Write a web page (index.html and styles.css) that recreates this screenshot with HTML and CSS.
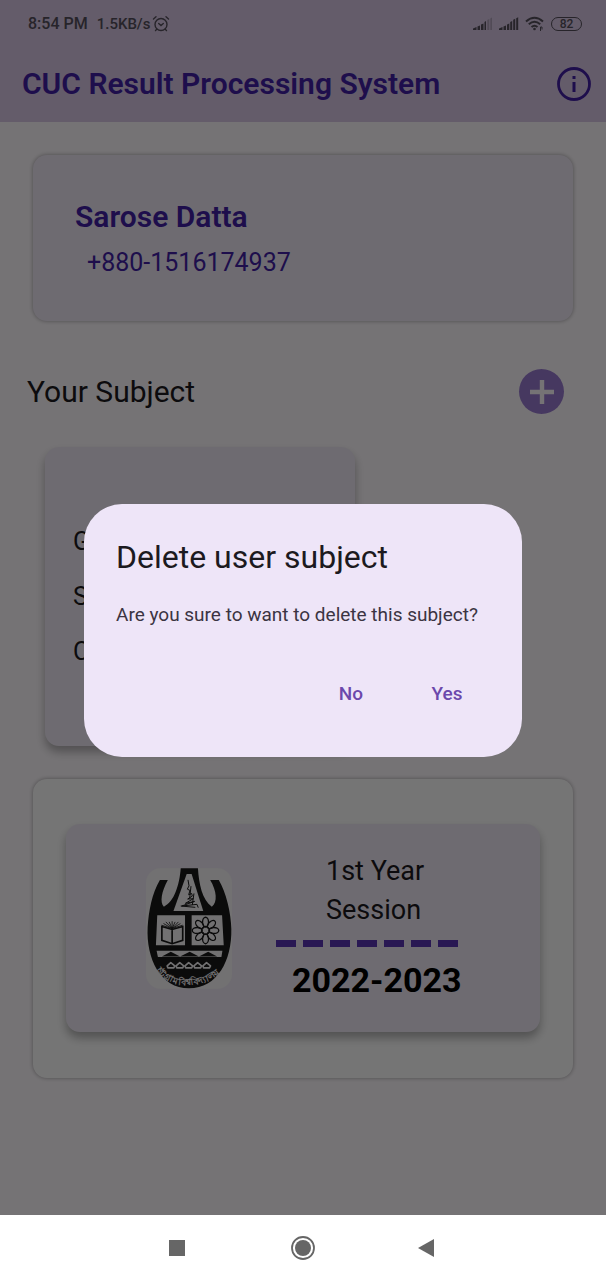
FILE: index.html
```html
<!DOCTYPE html>
<html lang="en">
<head>
<meta charset="utf-8">
<meta name="viewport" content="width=device-width, initial-scale=1">
<title>CUC Result Processing System</title>
<link rel="stylesheet" href="styles.css">
</head>
<body>
<div class="app">
  <header class="top">
    <div class="status">
      <span>8:54 PM</span>
      <span class="speed">1.5KB/s</span>
      <svg class="alarm" width="18" height="18" viewBox="0 0 18 18" fill="none" stroke="currentColor" stroke-width="1.4" stroke-linecap="round"><circle cx="9" cy="9.500" r="6"/><path d="M1.500 4 4 1.800M16.500 4 14 1.800M4.700 14.200 3.500 15.600M13.300 14.200l1.200 1.400M6.700 8.500 9 10.500l2.300-2"/></svg>
      <span class="status-icons">
        <svg width="20" height="14" viewBox="0 0 20 14" fill="currentColor"><path d="M0 13v-1.500L3.500 10v3zM4.500 13V9.500L7 8.500V13zM8 13V7.500l2.500-1V13zM11.500 13V5L13 4v9z"/><path opacity=".3" d="M14.300 13V3l2-1v11zM17.300 13V1.500L19 .5V13z"/></svg>
        <svg width="20" height="14" viewBox="0 0 20 14" fill="currentColor"><path d="M0 13v-1.500L3.500 10v3zM4.500 13V9.500L7 8.500V13zM8 13V7.500l2.300-1V13zM11.200 13V5l2-1v9zM14.200 13V2.800l2-1V13zM17.200 13V1.200l2-.9V13z"/></svg>
        <svg width="20" height="16" viewBox="0 0 20 16" fill="none" stroke="currentColor" stroke-width="2"><path d="M1 5.500Q9.500-2 18 5.500M3.800 8.300q5.700-5 11.400 0M6.500 11q3-2.600 6 0"/><circle cx="9.500" cy="13" r="1.300" fill="currentColor" stroke="none"/><path stroke-width="1" d="M15.500 15v-4h1.500v2.500"/></svg>
        <span class="battery">82</span>
      </span>
    </div>
    <div class="bar">
      <h1>CUC Result Processing System</h1>
      <button class="icon-button" aria-label="Information">
        <svg width="34" height="34" viewBox="0 0 34 34"><circle cx="17" cy="17" r="15.500" fill="none" stroke="currentColor" stroke-width="2.800"/><path fill="currentColor" d="M15.500 9h3v3h-3zM15.500 15h3v10h-3z"/></svg>
      </button>
    </div>
  </header>
  <main>
    <section class="profile">
      <h2>Sarose Datta</h2>
      <p>+880-1516174937</p>
    </section>
    <div class="subject-head">
      <h2>Your Subject</h2>
      <button class="add" aria-label="Add subject">
        <svg width="24" height="24" viewBox="0 0 24 24"><path fill="currentColor" d="M9.800 0h4.400v9.800H24v4.400h-9.800V24H9.800v-9.800H0V9.800h9.800z"/></svg>
      </button>
    </div>
    <section class="subject">
      <p>G</p>
      <p>S</p>
      <p>C</p>
    </section>
    <section class="sessions">
      <article class="session">
        <svg class="crest" width="86" height="121" viewBox="45 40 260 364" role="img" aria-label="University crest">
          <rect x="45" y="40" width="260" height="364" rx="44" fill="#f8f6f8"/>
          <path d="M150 40h52c3 48 13 96 42 116 18-14 15-48-5-81h26c22 37 37 99 38 148 2 96-42 180-128 180S45 313 50 218c3-49 13-103 37-143h24c-19 35-25 67-12 81 31-14 47-65 51-116z" fill="#181818"/>
          <path d="M168 57h15l35 112h-90z" fill="#f8f6f8"/>
          <path d="M172 75l3 18-5 10 8 4-4 13 9-4 2 8-14 9 17-1-24 14 28-6-39 14 46-5 4 10M181 94l-4 37M190 116l-5 35M150 154l44 4" fill="none" stroke="#181818" stroke-width="3"/>
          <path d="M79 182h84v91H75zM183 182h92l5 91h-97zM77 289h199l-3 19H81z" fill="#f8f6f8"/>
          <path d="M93 216v42l31 10 32-10v-42l-32 9zM124 225v42" fill="#f8f6f8" stroke="#181818" stroke-width="5"/>
          <path d="M124 222l-32-10M124 222l-26-15M124 222l-19-20M124 222l-9-20M124 222v-22M124 222l9-20M124 222l19-20M124 222l25-15M124 222l32-10" stroke="#181818" stroke-width="2.500"/>
          <g fill="none" stroke="#181818" stroke-width="4">
            <circle cx="225" cy="228" r="12"/>
            <ellipse cx="225" cy="203" rx="9" ry="15"/>
            <ellipse cx="225" cy="203" rx="9" ry="15" transform="rotate(45 225 228)"/>
            <ellipse cx="225" cy="203" rx="9" ry="15" transform="rotate(90 225 228)"/>
            <ellipse cx="225" cy="203" rx="9" ry="15" transform="rotate(135 225 228)"/>
            <ellipse cx="225" cy="203" rx="9" ry="15" transform="rotate(180 225 228)"/>
            <ellipse cx="225" cy="203" rx="9" ry="15" transform="rotate(225 225 228)"/>
            <ellipse cx="225" cy="203" rx="9" ry="15" transform="rotate(270 225 228)"/>
            <ellipse cx="225" cy="203" rx="9" ry="15" transform="rotate(315 225 228)"/>
          </g>
          <path d="M93 307l27-15 28 15 29-15 28 15 28-15 27 15z" fill="#181818"/>
          <path d="M111 341l-2-6 11-10 12 10-3 6zM138 341l-2-6 11-10 12 10-3 6zM165 341l-2-6 11-10 12 10-3 6zM192 341l-2-6 11-10 12 10-3 6zM219 341l-2-6 11-10 12 10-3 6z" fill="none" stroke="#f8f6f8" stroke-width="5" stroke-linejoin="round"/>
          <path id="rim" d="M74 346C112 412 240 412 284 334" fill="none"/>
          <text class="crest-text"><textPath href="#rim">চট্টগ্রাম বিশ্ববিদ্যালয়</textPath></text>
        </svg>
        <div class="session-info">
          <p class="year">1st Year<br>Session</p>
          <div class="dashes"><i></i><i></i><i></i><i></i><i></i><i></i><i></i></div>
          <strong>2022-2023</strong>
        </div>
      </article>
    </section>
  </main>
  <div class="scrim">
    <div class="dialog" role="alertdialog" aria-modal="true" aria-labelledby="dialog-title" aria-describedby="dialog-text">
      <h2 id="dialog-title">Delete user subject</h2>
      <p id="dialog-text">Are you sure to want to delete this subject?</p>
      <div class="actions">
        <button>No</button>
        <button>Yes</button>
      </div>
    </div>
  </div>
</div>
<nav class="system-nav">
  <button aria-label="Recent apps"><svg width="24" height="24" viewBox="0 0 24 24"><path fill="currentColor" d="M3 4h16v16H3z"/></svg></button>
  <button aria-label="Home"><svg width="24" height="24" viewBox="0 0 24 24"><circle cx="12" cy="12" r="11" fill="none" stroke="currentColor" stroke-width="1.800"/><circle cx="12" cy="12" r="8" fill="currentColor"/></svg></button>
  <button aria-label="Back"><svg width="24" height="24" viewBox="0 0 24 24"><path fill="currentColor" d="M18 3v18L2 12z"/></svg></button>
</nav>
</body>
</html>
```
FILE: styles.css
```css
* { box-sizing: border-box; }
body {
  margin: 0;
  min-height: 100vh;
  display: flex;
  flex-direction: column;
  background: #fff;
  color: #1c1a20;
  font-family: Roboto, "Noto Sans", sans-serif;
}
h1, h2, p { margin: 0; font-weight: 400; }
button {
  padding: 0;
  border: 0;
  background: none;
  color: inherit;
  font: inherit;
}
svg { display: block; }

.app { position: relative; flex: 1; background: #fffbff; }
.top { background: #d9c8e6; }
.status {
  display: flex;
  align-items: center;
  height: 47px;
  padding: 0 24px 0 28px;
  color: #55505c;
  font-size: 16px;
  font-weight: 500;
}
.speed { margin-left: 9px; font-size: 15px; }
.alarm { margin-left: 2px; }
.status-icons { display: flex; align-items: center; gap: 6px; margin-left: auto; }
.battery {
  width: 31px;
  height: 14px;
  border: 1px solid;
  border-radius: 7px;
  font-size: 12px;
  line-height: 12px;
  text-align: center;
}
.bar {
  display: flex;
  align-items: center;
  justify-content: space-between;
  height: 75px;
  padding: 0 15px 2px 22px;
  color: #431fa6;
}
.bar h1 { font-size: 30px; font-weight: 600; }

main { padding: 33px; }
.profile {
  height: 166px;
  padding: 44px 42px;
  border-radius: 14px;
  background: #f0eaf6;
  box-shadow: 0 0 4px rgba(0, 0, 0, .35);
  color: #431fa6;
}
.profile h2 { font-size: 30px; line-height: 36px; font-weight: 600; }
.profile p { padding: 10px 0 0 12px; font-size: 25px; line-height: 36px; }
.subject-head {
  display: flex;
  align-items: center;
  justify-content: space-between;
  margin: 48px 9px 0 -6px;
}
.subject-head h2 { font-size: 30px; }
.add {
  display: grid;
  place-items: center;
  width: 45px;
  height: 45px;
  border-radius: 50%;
  background: #9a7bd2;
  color: #fffbff;
}
.subject {
  width: 310px;
  height: 299px;
  margin: 33px 12px 0;
  padding: 67px 28px;
  border-radius: 14px;
  background: #f0eaf6;
  box-shadow: 0 6px 10px rgba(0, 0, 0, .3);
  font-size: 25px;
  line-height: 55px;
}
.sessions {
  margin-top: 33px;
  padding: 45px 33px 46px;
  border-radius: 14px;
  background: #fff;
  box-shadow: 0 0 4px rgba(0, 0, 0, .35);
}
.session {
  display: flex;
  gap: 44px;
  height: 208px;
  padding: 28px 80px;
  border-radius: 14px;
  background: #f0eaf6;
  box-shadow: 0 6px 10px rgba(0, 0, 0, .3);
}
.crest { flex: none; margin-top: 16px; }
.crest-text { fill: #f8f6f8; font-size: 27px; font-weight: 700; }
.session-info { display: flex; flex-direction: column; white-space: nowrap; }
.year { padding-left: 50px; font-size: 27px; line-height: 39px; }
.dashes { display: flex; gap: 7px; margin: 10px 0; }
.dashes i { width: 20px; height: 7px; background: #5b35b5; }
.session-info strong {
  padding-left: 16px;
  color: #000;
  font-size: 34px;
  line-height: 46px;
}

.scrim {
  position: absolute;
  inset: 0;
  display: grid;
  align-items: center;
  padding: 46px 84px 0;
  background: rgba(0, 0, 0, .54);
}
.dialog {
  padding: 33px 32px 38px;
  border-radius: 38px;
  background: #eee5f8;
}
.dialog h2 { font-size: 32px; line-height: 40px; }
.dialog p { margin-top: 22px; color: #3b3442; font-size: 19px; line-height: 32px; }
.actions {
  display: flex;
  justify-content: flex-end;
  gap: 38px;
  margin-top: 36px;
  padding-right: 14px;
  color: #6b48ac;
  font-size: 19px;
  font-weight: 500;
}
.actions button { min-width: 58px; height: 52px; }

.system-nav {
  display: flex;
  align-items: center;
  justify-content: center;
  gap: 101px;
  height: 65px;
  color: #666;
}
```
